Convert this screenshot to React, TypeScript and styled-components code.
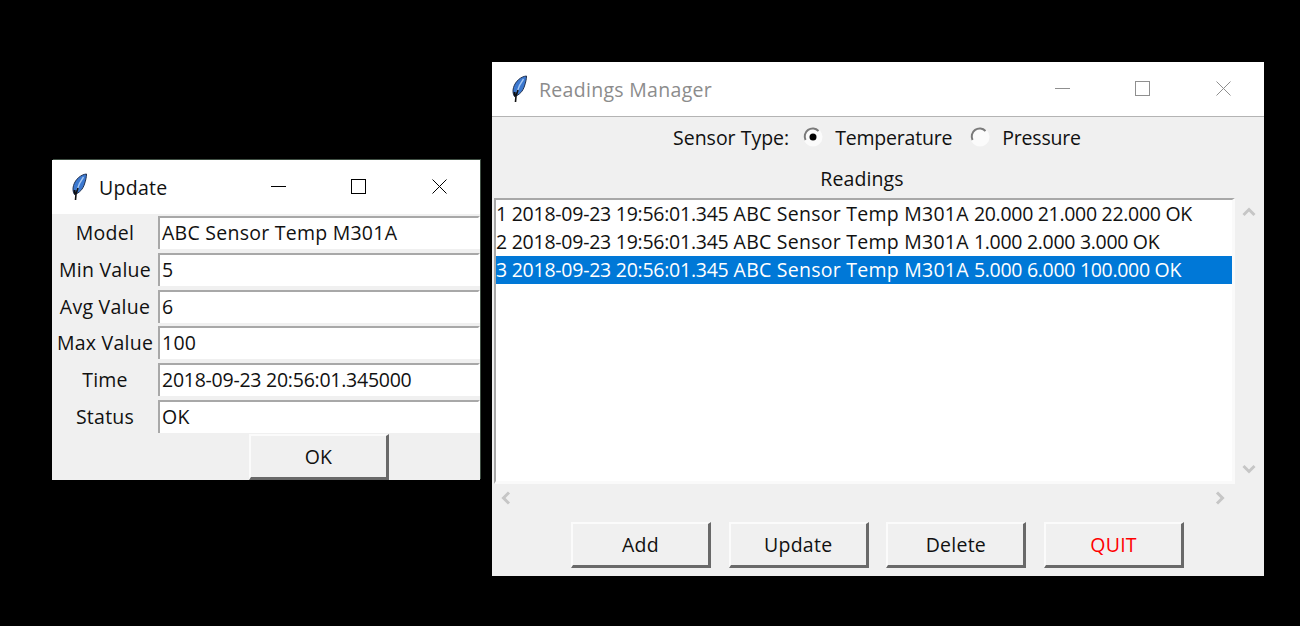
import React from 'react'
import styled, { createGlobalStyle } from 'styled-components'

const GlobalStyle = createGlobalStyle`
  html, body {
    margin: 0;
    height: 100%;
    background: #000;
    overflow: hidden;
  }
  body {
    font-family: "Open Sans", "Noto Sans", "Liberation Sans", sans-serif;
    font-size: 19.5px;
    color: #111;
  }
`

const Desktop = styled.div`
  position: relative;
  width: 1300px;
  height: 626px;
  background: #000;
`

const Window = styled.div<{ $x: number; $y: number; $w: number; $h: number; $active?: boolean }>`
  position: absolute;
  left: ${p => p.$x}px;
  top: ${p => p.$y}px;
  width: ${p => p.$w}px;
  height: ${p => p.$h}px;
  background: #f0f0f0;
  display: flex;
  flex-direction: column;
  overflow: hidden;
  box-shadow: ${p => (p.$active ? '1px -1px 0 0 #3f4f43' : 'none')};
`

const TitleBar = styled.div<{ $inactive?: boolean; $lined?: boolean }>`
  flex: none;
  box-sizing: border-box;
  height: ${p => (p.$lined ? 55 : 54)}px;
  background: #fff;
  display: flex;
  align-items: center;
  padding-left: 19px;
  color: ${p => (p.$inactive ? '#8c8c8c' : '#111')};
  border-bottom: ${p => (p.$lined ? '1px solid #b4b4b4' : 'none')};
`

const TitleText = styled.span`
  margin-left: 11px;
  flex: 1;
  letter-spacing: 0.3px;
`

const Controls = styled.div`
  display: flex;
  height: 100%;
  padding-right: 0.5px;
`

const ControlButton = styled.div<{ $inactive?: boolean }>`
  box-sizing: border-box;
  width: 80.5px;
  padding-bottom: 1px;
  display: flex;
  align-items: center;
  justify-content: center;
  color: ${p => (p.$inactive ? '#8f8f8f' : '#000')};
`

const Form = styled.div`
  flex: none;
  height: 220px;
  padding-top: 2px;
  box-sizing: border-box;
  display: grid;
  grid-auto-rows: 36.8px;
`

const FormRow = styled.div`
  display: grid;
  grid-template-columns: 106px 1fr;
`

const FieldLabel = styled.div`
  text-align: center;
  line-height: 33px;
  white-space: nowrap;
  letter-spacing: 0.25px;
`

const Entry = styled.div<{ $numeric?: boolean }>`
  box-sizing: border-box;
  height: 33px;
  background: #fff;
  border-top: 2px solid #a8a8a8;
  border-left: 2px solid #a8a8a8;
  border-right: 2px solid #fff;
  padding-left: 2px;
  line-height: 29px;
  white-space: nowrap;
  letter-spacing: ${p => (p.$numeric ? '-0.25px' : '0.25px')};
`

const BevelButton = styled.div<{ $danger?: boolean }>`
  box-sizing: border-box;
  width: 140px;
  height: 46px;
  background: #f0f0f0;
  border-style: solid;
  border-width: 2px 3px 3px 2px;
  border-color: #fbfbfb #696969 #696969 #fbfbfb;
  color: ${p => (p.$danger ? '#ff0000' : '#111')};
  display: flex;
  align-items: center;
  justify-content: center;
  letter-spacing: 0.25px;
`

const OkRow = styled.div`
  display: flex;
  padding-left: 197px;
`

const SensorRow = styled.div`
  flex: none;
  box-sizing: border-box;
  height: 42px;
  display: flex;
  align-items: center;
  padding: 0 0 2px 181px;
`

const RadioLabel = styled.label<{ $left: number }>`
  display: flex;
  align-items: center;
  margin-left: ${p => p.$left}px;
  gap: 12px;
  letter-spacing: -0.2px;

  svg {
    margin-top: -1px;
  }
`

const ListHeading = styled.div`
  flex: none;
  height: 39px;
  line-height: 39px;
  text-align: center;
  padding-right: 32px;
  letter-spacing: 0.1px;
`

const ListArea = styled.div`
  flex: none;
  display: grid;
  grid-template-columns: 741px 29px;
  grid-template-rows: 286px 30px;
  padding-left: 2px;
`

const ListBox = styled.div`
  box-sizing: border-box;
  background: #fff;
  border-top: 2px solid #a8a8a8;
  border-left: 2px solid #a8a8a8;
  border-right: 3px solid #fafafa;
  border-bottom: 3px solid #fafafa;
`

const ListRow = styled.div<{ $selected?: boolean }>`
  height: 28px;
  line-height: 27px;
  white-space: nowrap;
  background: ${p => (p.$selected ? '#0078d7' : 'transparent')};
  color: ${p => (p.$selected ? '#fff' : '#111')};
`

const Stamp = styled.span`
  letter-spacing: -0.25px;
`

const ModelName = styled.span`
  letter-spacing: 0.25px;
`

const Values = styled.span`
  letter-spacing: -0.3px;
`

const VScroll = styled.div`
  display: flex;
  flex-direction: column;
  justify-content: space-between;
  align-items: center;
  padding: 7px 1px 8px 0;
`

const HScroll = styled.div`
  display: flex;
  justify-content: space-between;
  align-items: center;
  padding: 0 8px 2px 5px;
`

const ButtonRow = styled.div`
  display: flex;
  gap: 17.7px;
  padding: 8px 0 0 79px;
`

const Feather = () => (
  <svg width="17" height="28" viewBox="0 0 17 28">
    <path d="M15.5 1 C10 1.5 4.5 6 2.5 12.5 C1.5 16 2 19.5 3.5 21.5 C8.5 20 12 16 13.5 11 C14.8 7 15.5 4 15.5 1 Z" fill="#3b78d0" stroke="#20304f" strokeWidth="1" />
    <path d="M12.5 4 C9.5 8 7.5 12 6 17" fill="none" stroke="#a6c8f2" strokeWidth="1.4" />
    <path d="M3.5 17 C3.5 19 4 20.5 4.5 21" fill="none" stroke="#0c0c0c" strokeWidth="2" />
    <path d="M4.5 27 L5 21 L7 15" fill="none" stroke="#111" strokeWidth="1.6" />
  </svg>
)

const MinimizeIcon = () => (
  <svg width="15" height="15" viewBox="0 0 15 15"><path d="M0 7.5 H15" stroke="currentColor" /></svg>
)
const MaximizeIcon = () => (
  <svg width="15" height="15" viewBox="0 0 15 15"><rect x="0.5" y="0.5" width="14" height="14" fill="none" stroke="currentColor" /></svg>
)
const CloseIcon = () => (
  <svg width="15" height="15" viewBox="0 0 15 15"><path d="M0.5 0.5 L14.5 14.5 M14.5 0.5 L0.5 14.5" stroke="currentColor" /></svg>
)

const WindowControls: React.FC<{ inactive?: boolean }> = ({ inactive }) => (
  <Controls>
    <ControlButton $inactive={inactive}><MinimizeIcon /></ControlButton>
    <ControlButton $inactive={inactive}><MaximizeIcon /></ControlButton>
    <ControlButton $inactive={inactive}><CloseIcon /></ControlButton>
  </Controls>
)

const Radio: React.FC<{ checked?: boolean }> = ({ checked }) => (
  <svg width="20" height="20" viewBox="0 0 20 20">
    <circle cx="10" cy="10" r="9.5" fill="#fbfbfb" />
    <path d="M2.5 13 A8 8 0 0 1 15.5 4" fill="none" stroke="#7a7a7a" strokeWidth="2" />
    {checked && <circle cx="10" cy="10" r="3.5" fill="#000" />}
  </svg>
)

const Chevron: React.FC<{ d: string }> = ({ d }) => (
  <svg width="14" height="14" viewBox="0 0 14 14">
    <path d={d} fill="none" stroke="#c6c6c6" strokeWidth="3" />
  </svg>
)

const fields = [
  { label: 'Model', value: 'ABC Sensor Temp M301A' },
  { label: 'Min Value', value: '5' },
  { label: 'Avg Value', value: '6' },
  { label: 'Max Value', value: '100' },
  { label: 'Time', value: '2018-09-23 20:56:01.345000', numeric: true },
  { label: 'Status', value: 'OK' },
]

const readings = [
  { stamp: '1 2018-09-23 19:56:01.345', values: '20.000 21.000 22.000 OK' },
  { stamp: '2 2018-09-23 19:56:01.345', values: '1.000 2.000 3.000 OK' },
  { stamp: '3 2018-09-23 20:56:01.345', values: '5.000 6.000 100.000 OK' },
]

const App: React.FC = () => (
  <Desktop>
    <GlobalStyle />
    <Window $x={52} $y={160} $w={428} $h={320} $active>
      <TitleBar>
        <Feather />
        <TitleText>Update</TitleText>
        <WindowControls />
      </TitleBar>
      <Form>
        {fields.map(f => (
          <FormRow key={f.label}>
            <FieldLabel>{f.label}</FieldLabel>
            <Entry $numeric={f.numeric}>{f.value}</Entry>
          </FormRow>
        ))}
      </Form>
      <OkRow>
        <BevelButton>OK</BevelButton>
      </OkRow>
    </Window>

    <Window $x={492} $y={62} $w={772} $h={514}>
      <TitleBar $inactive $lined>
        <Feather />
        <TitleText>Readings Manager</TitleText>
        <WindowControls inactive />
      </TitleBar>
      <SensorRow>
        Sensor Type:
        <RadioLabel $left={14}><Radio checked />Temperature</RadioLabel>
        <RadioLabel $left={18}><Radio />Pressure</RadioLabel>
      </SensorRow>
      <ListHeading>Readings</ListHeading>
      <ListArea>
        <ListBox>
          {readings.map((row, i) => (
            <ListRow key={row.stamp} $selected={i === 2}>
              <Stamp>{row.stamp}</Stamp> <ModelName>ABC Sensor Temp M301A</ModelName> <Values>{row.values}</Values>
            </ListRow>
          ))}
        </ListBox>
        <VScroll>
          <Chevron d="M1.5 10 L7 4.5 L12.5 10" />
          <Chevron d="M1.5 4 L7 9.5 L12.5 4" />
        </VScroll>
        <HScroll>
          <Chevron d="M10 1.5 L4.5 7 L10 12.5" />
          <Chevron d="M4 1.5 L9.5 7 L4 12.5" />
        </HScroll>
      </ListArea>
      <ButtonRow>
        <BevelButton>Add</BevelButton>
        <BevelButton>Update</BevelButton>
        <BevelButton>Delete</BevelButton>
        <BevelButton $danger>QUIT</BevelButton>
      </ButtonRow>
    </Window>
  </Desktop>
)

export default App
